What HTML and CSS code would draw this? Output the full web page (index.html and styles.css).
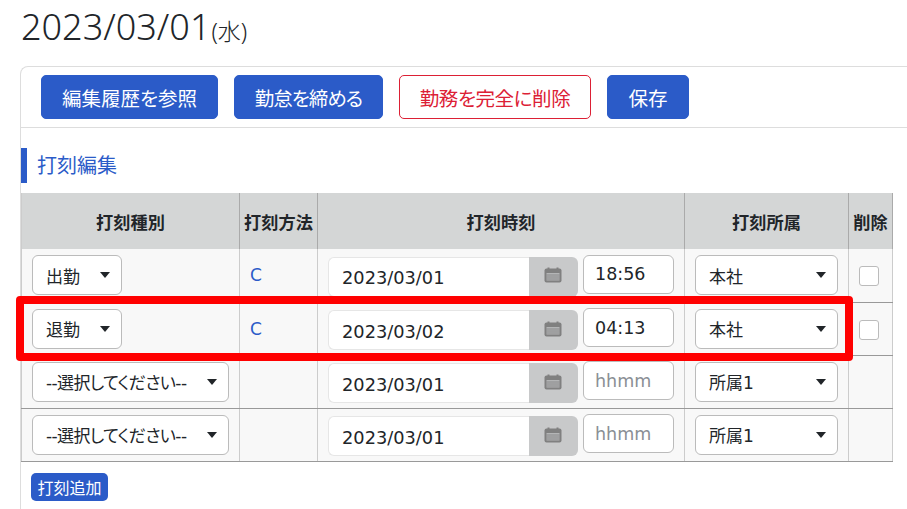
FILE: index.html
```html
<!DOCTYPE html>
<html lang="ja">
<head>
    <meta charset="UTF-8">
    <meta name="viewport" content="width=device-width, initial-scale=1.0">
    <title>勤務編集</title>
    <link rel="stylesheet" href="styles.css">
</head>
<body>
    <svg class="icon-defs" width="0" height="0">
        <symbol id="calendar" viewBox="0 0 18 17">
            <path d="M3.5 1.5h2v2h-2zM12.5 1.5h2v2h-2z" fill="#808080"/>
            <rect x="0.5" y="2.5" width="17" height="14" rx="2" fill="#808080"/>
            <path d="M2.5 7h13v7.5h-13z" fill="#b4b5b6"/>
            <path d="M2.5 9h13M2.5 11h13M2.5 13h13" stroke="#808080" stroke-width="0.8"/>
        </symbol>
    </svg>

    <h1 class="page-title">2023/03/01<small>(水)</small></h1>

    <div class="card">
        <div class="toolbar">
            <button class="btn btn-wide">編集履歴を参照</button>
            <button class="btn btn-close">勤怠を締める</button>
            <button class="btn btn-danger">勤務を完全に削除</button>
            <button class="btn btn-save">保存</button>
        </div>

        <h2 class="section-title">打刻編集</h2>

        <table class="stamp-table">
            <colgroup>
                <col class="col-type">
                <col class="col-method">
                <col class="col-time">
                <col class="col-office">
                <col class="col-delete">
            </colgroup>
            <thead>
                <tr>
                    <th>打刻種別</th>
                    <th>打刻方法</th>
                    <th>打刻時刻</th>
                    <th>打刻所属</th>
                    <th>削除</th>
                </tr>
            </thead>
            <tbody>
                <tr>
                    <td><div class="select select-short"><span>出勤</span></div></td>
                    <td class="method">C</td>
                    <td>
                        <div class="time-cell">
                            <div class="date-group">
                                <input class="date-input" value="2023/03/01">
                                <span class="date-addon"><svg width="18" height="17"><use href="#calendar"/></svg></span>
                            </div>
                            <input class="time-input" value="18:56" placeholder="hhmm">
                        </div>
                    </td>
                    <td><div class="select"><span>本社</span></div></td>
                    <td><span class="check"></span></td>
                </tr>
                <tr>
                    <td><div class="select select-short"><span>退勤</span></div></td>
                    <td class="method">C</td>
                    <td>
                        <div class="time-cell">
                            <div class="date-group">
                                <input class="date-input" value="2023/03/02">
                                <span class="date-addon"><svg width="18" height="17"><use href="#calendar"/></svg></span>
                            </div>
                            <input class="time-input" value="04:13" placeholder="hhmm">
                        </div>
                    </td>
                    <td><div class="select"><span>本社</span></div></td>
                    <td><span class="check"></span></td>
                </tr>
                <tr>
                    <td><div class="select"><span class="select-empty">--選択してください--</span></div></td>
                    <td class="method"></td>
                    <td>
                        <div class="time-cell">
                            <div class="date-group">
                                <input class="date-input" value="2023/03/01">
                                <span class="date-addon"><svg width="18" height="17"><use href="#calendar"/></svg></span>
                            </div>
                            <input class="time-input" placeholder="hhmm">
                        </div>
                    </td>
                    <td><div class="select"><span>所属1</span></div></td>
                    <td></td>
                </tr>
                <tr>
                    <td><div class="select"><span class="select-empty">--選択してください--</span></div></td>
                    <td class="method"></td>
                    <td>
                        <div class="time-cell">
                            <div class="date-group">
                                <input class="date-input" value="2023/03/01">
                                <span class="date-addon"><svg width="18" height="17"><use href="#calendar"/></svg></span>
                            </div>
                            <input class="time-input" placeholder="hhmm">
                        </div>
                    </td>
                    <td><div class="select"><span>所属1</span></div></td>
                    <td></td>
                </tr>
            </tbody>
        </table>

        <button class="btn-add">打刻追加</button>
    </div>

    <!-- 赤枠の注釈 -->
    <div class="highlight"></div>
</body>
</html>
```

FILE: styles.css
```css
* {
    margin: 0;
    padding: 0;
    box-sizing: border-box;
}

html, body {
    height: 509px;
    overflow: hidden;
}

body {
    position: relative;
    background: #fff;
    color: #212529;
    font-family: "Noto Sans", "Noto Sans CJK JP", sans-serif;
    font-size: 16px;
    font-feature-settings: "palt";
}

.icon-defs {
    position: absolute;
}

/* 日付見出し */
.page-title {
    height: 66px;
    padding: 4px 0 0 21px;
    font-size: 36px;
    font-weight: 300;
    line-height: 46px;
    color: #212529;
}

.page-title small {
    margin-left: 1px;
    font-size: 23px;
}

/* カード */
.card {
    width: 887px;
    height: 443px;
    margin-left: 20px;
    border: 1px solid #ddd;
    border-right: 0;
    border-bottom: 0;
    border-radius: 8px 0 0 0;
}

.toolbar {
    display: flex;
    gap: 16px;
    height: 61px;
    padding: 8px 0 0 20px;
    border-bottom: 1px solid #ddd;
}

.btn {
    height: 44px;
    border: 1px solid #2b5bc8;
    border-radius: 5px;
    background: #2b5bc8;
    color: #fff;
    font-family: inherit;
    font-size: 19.5px;
    font-feature-settings: "palt";
}

.btn-wide { width: 177px; }
.btn-close { width: 149px; letter-spacing: -1px; }
.btn-save { width: 82px; }

.btn-danger {
    width: 192px;
    background: #fff;
    border-color: #dc2035;
    color: #dc2035;
    letter-spacing: -0.4px;
}

.section-title {
    height: 35px;
    margin-top: 20px;
    padding-left: 10px;
    border-left: 6px solid #2b5bc8;
    color: #2b5bc8;
    font-size: 20px;
    font-weight: 400;
    line-height: 36px;
}

/* 打刻テーブル */
.stamp-table {
    width: 871px;
    margin-top: 10px;
    border-collapse: collapse;
    table-layout: fixed;
}

.col-type { width: 218px; }
.col-method { width: 78px; }
.col-time { width: 367px; }
.col-office { width: 164px; }
.col-delete { width: 44px; }

.stamp-table th {
    height: 56px;
    background: #d4d6d6;
    border-left: 1px solid #aaa;
    border-right: 1px solid #aaa;
    font-size: 17.2px;
    font-weight: 700;
    white-space: nowrap;
}

.stamp-table th:first-child,
.stamp-table td:first-child {
    border-left: 1px solid #ccc;
}

.stamp-table td {
    height: 53px;
    padding: 0 10px;
    background: #f8f8f8;
    border-left: 1px solid #ccc;
    border-right: 1px solid #ccc;
    border-bottom: 1px solid #999;
    vertical-align: middle;
}

.method {
    color: #2b5bc8;
    font-family: "DejaVu Sans", sans-serif;
    font-size: 17px;
}

/* セレクト */
.select {
    position: relative;
    display: flex;
    align-items: center;
    width: 143px;
    height: 40px;
    padding-left: 13px;
    background: #fff;
    border: 1px solid #bbb;
    border-radius: 6px;
    font-family: "DejaVu Sans", "Noto Sans CJK JP", sans-serif;
    font-size: 17px;
    white-space: nowrap;
}

.select-empty {
    letter-spacing: -0.6px;
}

td:first-child .select {
    width: 197px;
}

td:first-child .select-short {
    width: 90px;
}

.select::after {
    content: "";
    position: absolute;
    right: 11px;
    top: 16px;
    border-left: 5px solid transparent;
    border-right: 5px solid transparent;
    border-top: 6px solid #212529;
}

/* 日付と時刻 */
.time-cell {
    display: flex;
    align-items: center;
    gap: 5px;
}

.date-group {
    display: flex;
    width: 250px;
    height: 40px;
    margin-top: 3px;
}

.date-input {
    width: 201px;
    padding: 2px 0 0 13px;
    background: #fff;
    border: 1px solid #e6e6e6;
    border-right: 0;
    border-radius: 6px 0 0 6px;
    color: #212529;
    font-family: "DejaVu Sans", sans-serif;
    font-size: 17.8px;
}

.date-addon {
    display: flex;
    align-items: center;
    justify-content: center;
    width: 49px;
    padding: 0 2px 4px 0;
    background: #c8c9ca;
    border-radius: 0 6px 6px 0;
}

.time-input {
    width: 91px;
    height: 39px;
    margin-top: -2px;
    padding-left: 11px;
    background: #fff;
    border: 1px solid #bbb;
    border-radius: 6px;
    color: #212529;
    font-family: "DejaVu Sans", sans-serif;
    font-size: 17.5px;
}

.time-input::placeholder {
    color: #8a8f95;
    opacity: 1;
}

.check {
    display: block;
    width: 20px;
    height: 20px;
    margin-top: 2px;
    background: #fff;
    border: 1px solid #bbb;
    border-radius: 3px;
}

.btn-add {
    display: block;
    width: 77px;
    height: 28px;
    margin: 11px 0 0 10px;
    background: #2b5bc8;
    border: 0;
    border-radius: 5px;
    color: #fff;
    font-family: inherit;
    font-size: 16px;
}

/* 注釈 */
.highlight {
    position: absolute;
    left: 16px;
    top: 296px;
    width: 837px;
    height: 65px;
    border: 8px solid #f00;
    border-radius: 4px;
}
```
